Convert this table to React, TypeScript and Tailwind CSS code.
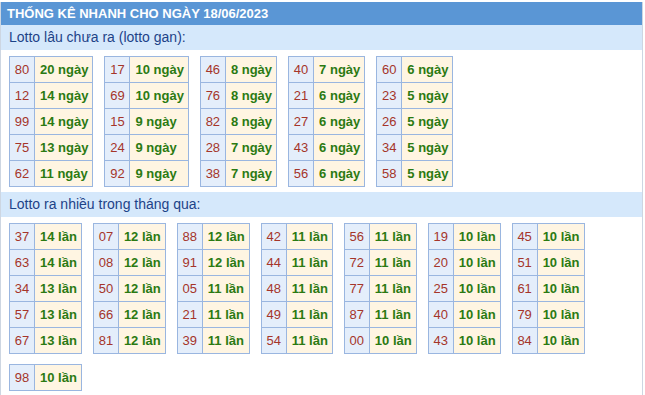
import React from 'react'

type Row = [string, number]

const gan: Row[][] = [
  [['80', 20], ['12', 14], ['99', 14], ['75', 13], ['62', 11]],
  [['17', 10], ['69', 10], ['15', 9], ['24', 9], ['92', 9]],
  [['46', 8], ['76', 8], ['82', 8], ['28', 7], ['38', 7]],
  [['40', 7], ['21', 6], ['27', 6], ['43', 6], ['56', 6]],
  [['60', 6], ['23', 5], ['26', 5], ['34', 5], ['58', 5]],
]

const nhieu: Row[][] = [
  [['37', 14], ['63', 14], ['34', 13], ['57', 13], ['67', 13]],
  [['07', 12], ['08', 12], ['50', 12], ['66', 12], ['81', 12]],
  [['88', 12], ['91', 12], ['05', 11], ['21', 11], ['39', 11]],
  [['42', 11], ['44', 11], ['48', 11], ['49', 11], ['54', 11]],
  [['56', 11], ['72', 11], ['77', 11], ['87', 11], ['00', 10]],
  [['19', 10], ['20', 10], ['25', 10], ['40', 10], ['43', 10]],
  [['45', 10], ['51', 10], ['61', 10], ['79', 10], ['84', 10]],
  [['98', 10]],
]

const LottoTable: React.FC<{ rows: Row[]; unit: string }> = ({ rows, unit }) => {
  return (
    <table className="border-collapse border border-[#9ab6e0]">
      <tbody>
        {rows.map(([so, n]) => (
          <tr key={so} className="h-[26px]">
            <td className="w-[25px] border border-[#9ab6e0] bg-[#e4eefb] px-[4px] text-center text-[13px] text-[#a5352a]">
              {so}
            </td>
            <td className="border border-[#9ab6e0] bg-[#fff5e2] pl-[5px] pr-[4px] text-[13px] font-bold text-[#2b7a12] whitespace-nowrap">
              {n} {unit}
            </td>
          </tr>
        ))}
      </tbody>
    </table>
  )
}

const Section: React.FC<{ title: string; tables: Row[][]; unit: string }> = ({ title, tables, unit }) => {
  return (
    <div>
      <div className="h-[25px] bg-[#d5e8fb] pl-[8px] flex items-center text-[14px] text-[#1d4388]">
        {title}
      </div>
      <div className="flex flex-wrap gap-x-[11px] gap-y-[10px] pl-[8px] pt-[6px] pb-[5px]">
        {tables.map((t, i) => (
          <LottoTable key={i} rows={t} unit={unit} />
        ))}
      </div>
    </div>
  )
}

export default function App() {
  return (
    <div className="bg-white min-h-[395px] pt-[2px]" style={{ fontFamily: '"Liberation Sans", Arial, sans-serif' }}>
      <div className="w-[643px] min-h-[393px] border-r border-l border-[#cdd6e2]">
        <div className="h-[23px] bg-[#5a96d5] pl-[6px] flex items-center text-[13px] font-bold text-white">
          THỐNG KÊ NHANH CHO NGÀY 18/06/2023
        </div>
        <Section title="Lotto lâu chưa ra (lotto gan):" tables={gan} unit="ngày" />
        <Section title="Lotto ra nhiều trong tháng qua:" tables={nhieu} unit="lần" />
      </div>
    </div>
  )
}
